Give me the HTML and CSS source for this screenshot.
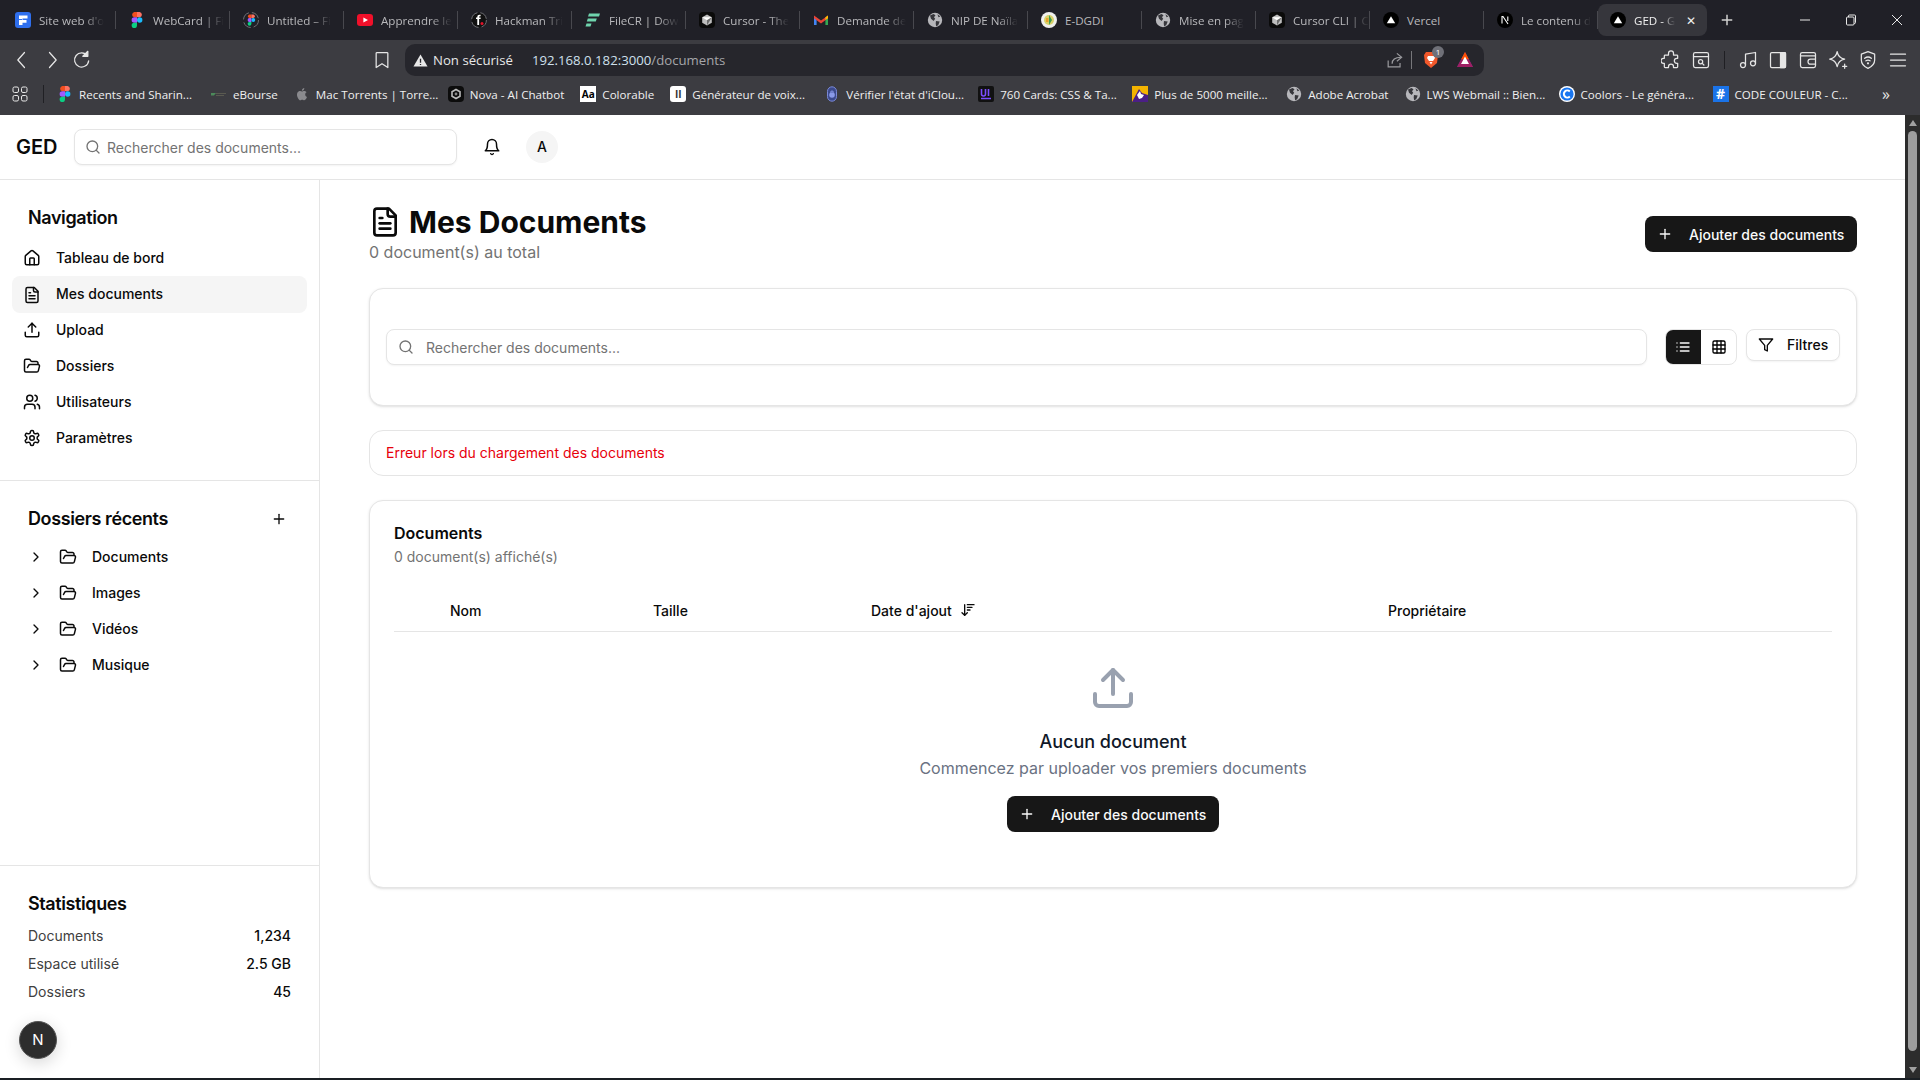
FILE: index.html
```html
<!DOCTYPE html>
<html lang="fr">
<head>
    <meta charset="UTF-8">
    <meta name="viewport" content="width=device-width, initial-scale=1.0">
    <title>GED - Mes Documents</title>
    <link rel="stylesheet" href="styles.css">
</head>
<body>
    <!-- icon sprites -->
    <svg class="sprites" width="0" height="0">
        <symbol id="i-house" viewBox="0 0 24 24"><path d="M15 21v-8a1 1 0 0 0-1-1h-4a1 1 0 0 0-1 1v8"/><path d="M3 10a2 2 0 0 1 .709-1.528l7-5.999a2 2 0 0 1 2.582 0l7 5.999A2 2 0 0 1 21 10v9a2 2 0 0 1-2 2H5a2 2 0 0 1-2-2z"/></symbol>
        <symbol id="i-file" viewBox="0 0 24 24"><path d="M15 2H6a2 2 0 0 0-2 2v16a2 2 0 0 0 2 2h12a2 2 0 0 0 2-2V7Z"/><path d="M14 2v4a2 2 0 0 0 2 2h4"/><path d="M10 9H8"/><path d="M16 13H8"/><path d="M16 17H8"/></symbol>
        <symbol id="i-upload" viewBox="0 0 24 24"><path d="M21 15v4a2 2 0 0 1-2 2H5a2 2 0 0 1-2-2v-4"/><polyline points="17 8 12 3 7 8"/><line x1="12" x2="12" y1="3" y2="15"/></symbol>
        <symbol id="i-folder" viewBox="0 0 24 24"><path d="m6 14 1.5-2.9A2 2 0 0 1 9.24 10H20a2 2 0 0 1 1.94 2.5l-1.54 6a2 2 0 0 1-1.95 1.5H4a2 2 0 0 1-2-2V5a2 2 0 0 1 2-2h3.9a2 2 0 0 1 1.69.9l.81 1.2a2 2 0 0 0 1.67.9H18a2 2 0 0 1 2 2v2"/></symbol>
        <symbol id="i-users" viewBox="0 0 24 24"><path d="M16 21v-2a4 4 0 0 0-4-4H6a4 4 0 0 0-4 4v2"/><circle cx="9" cy="7" r="4"/><path d="M22 21v-2a4 4 0 0 0-3-3.87"/><path d="M16 3.13a4 4 0 0 1 0 7.75"/></symbol>
        <symbol id="i-settings" viewBox="0 0 24 24"><path d="M12.22 2h-.44a2 2 0 0 0-2 2v.18a2 2 0 0 1-1 1.73l-.43.25a2 2 0 0 1-2 0l-.15-.08a2 2 0 0 0-2.73.73l-.22.38a2 2 0 0 0 .73 2.73l.15.1a2 2 0 0 1 1 1.72v.51a2 2 0 0 1-1 1.74l-.15.09a2 2 0 0 0-.73 2.73l.22.38a2 2 0 0 0 2.73.73l.15-.08a2 2 0 0 1 2 0l.43.25a2 2 0 0 1 1 1.73V20a2 2 0 0 0 2 2h.44a2 2 0 0 0 2-2v-.18a2 2 0 0 1 1-1.73l.43-.25a2 2 0 0 1 2 0l.15.08a2 2 0 0 0 2.73-.73l.22-.39a2 2 0 0 0-.73-2.73l-.15-.08a2 2 0 0 1-1-1.74v-.5a2 2 0 0 1 1-1.74l.15-.09a2 2 0 0 0 .73-2.73l-.22-.38a2 2 0 0 0-2.73-.73l-.15.08a2 2 0 0 1-2 0l-.43-.25a2 2 0 0 1-1-1.73V4a2 2 0 0 0-2-2z"/><circle cx="12" cy="12" r="3"/></symbol>
        <symbol id="i-bell" viewBox="0 0 24 24"><path d="M6 8a6 6 0 0 1 12 0c0 7 3 9 3 9H3s3-2 3-9"/><path d="M10.3 21a1.94 1.94 0 0 0 3.4 0"/></symbol>
        <symbol id="i-search" viewBox="0 0 24 24"><circle cx="11" cy="11" r="8"/><path d="m21 21-4.3-4.3"/></symbol>
        <symbol id="i-plus" viewBox="0 0 24 24"><path d="M5 12h14"/><path d="M12 5v14"/></symbol>
        <symbol id="i-chevron" viewBox="0 0 24 24"><path d="m9 18 6-6-6-6"/></symbol>
        <symbol id="i-list" viewBox="0 0 24 24"><path d="M3 12h.01M3 18h.01M3 6h.01M8 12h13M8 18h13M8 6h13"/></symbol>
        <symbol id="i-grid" viewBox="0 0 24 24"><rect width="18" height="18" x="3" y="3" rx="2"/><path d="M3 9h18M3 15h18M9 3v18M15 3v18"/></symbol>
        <symbol id="i-filter" viewBox="0 0 24 24"><polygon points="22 3 2 3 10 12.46 10 19 14 21 14 12.46 22 3"/></symbol>
        <symbol id="i-sort" viewBox="0 0 24 24"><path d="m3 16 4 4 4-4"/><path d="M7 20V4"/><path d="M11 4h10"/><path d="M11 8h7"/><path d="M11 12h4"/></symbol>

        <!-- favicons -->
        <symbol id="f-site" viewBox="0 0 16 16"><rect width="16" height="16" rx="3" fill="#2f6fed"/><path d="M4 3.5h8.5v3H7.5v1.6h4v2.6h-4V13H4z" fill="#fff"/><path d="M2 7h5v1H2z" fill="#2f6fed"/></symbol>
        <symbol id="f-figma" viewBox="0 0 16 16"><path d="M8 0H5.3a2.7 2.7 0 0 0 0 5.3H8z" fill="#f24e1e"/><path d="M8 0h2.7a2.7 2.7 0 0 1 0 5.3H8z" fill="#ff7262"/><path d="M8 5.3H5.3a2.7 2.7 0 0 0 0 5.4H8z" fill="#a259ff"/><circle cx="10.7" cy="8" r="2.7" fill="#1abcfe"/><path d="M8 10.7H5.3A2.7 2.7 0 1 0 8 13.4z" fill="#0acf83"/></symbol>
        <symbol id="f-spin" viewBox="0 0 16 16"><circle cx="8" cy="8" r="7.5" fill="none" stroke="#77777d" stroke-width=".9" stroke-dasharray="9 3"/><g transform="translate(2.8 2.4) scale(.7)"><path d="M8 0H5.3a2.7 2.7 0 0 0 0 5.3H8z" fill="#f24e1e"/><path d="M8 0h2.7a2.7 2.7 0 0 1 0 5.3H8z" fill="#ff7262"/><path d="M8 5.3H5.3a2.7 2.7 0 0 0 0 5.4H8z" fill="#a259ff"/><circle cx="10.7" cy="8" r="2.7" fill="#1abcfe"/><path d="M8 10.7H5.3A2.7 2.7 0 1 0 8 13.4z" fill="#0acf83"/></g></symbol>
        <symbol id="f-youtube" viewBox="0 0 16 16"><rect y="2" width="16" height="12" rx="3" fill="#f0102a"/><path d="M6.4 5.4 11 8l-4.6 2.6z" fill="#fff"/></symbol>
        <symbol id="f-hackman" viewBox="0 0 16 16"><circle cx="8" cy="8" r="7.4" fill="#111" stroke="#77777d" stroke-width=".9" stroke-dasharray="9 3"/><path d="M6.3 13V7H5V5.5h1.3V5c0-1.6.9-2.3 2.3-2.3h1v1.6h-.7c-.6 0-.8.2-.8.8v.4h1.5V7H8.1v6z" fill="#fff"/><circle cx="11" cy="11.4" r="1.5" fill="#e2132a"/></symbol>
        <symbol id="f-filecr" viewBox="0 0 16 16"><path d="M4 1.5h11l-1 3H3zM2.8 6.5h9l-1 3h-9zM1.5 11.5h5l-1 3h-5z" fill="#6fd4ad"/></symbol>
        <symbol id="f-cursor" viewBox="0 0 16 16"><rect width="16" height="16" rx="4" fill="#0a0a0a"/><path d="M8 2.6 12.8 5.3v5.4L8 13.4l-4.8-2.7V5.3z" fill="#bdbdbd"/><path d="M3.2 5.3h9.6L8 8.2z" fill="#fff"/><path d="M8 8.2 12.8 5.3 8 13.4z" fill="#6d6d6d"/></symbol>
        <symbol id="f-gmail" viewBox="0 0 16 16"><path d="M1 4v9h2.6V7.2z" fill="#4285f4"/><path d="M15 4v9h-2.6V7.2z" fill="#34a853"/><path d="M1 3.4 8 8.6l7-5.2v2.8L8 11.4 1 6.200z" fill="#ea4335"/><path d="M12.400 5.300 15 3.400v2.800l-2.600 1.900z" fill="#fbbc04"/></symbol>
        <symbol id="f-globe" viewBox="0 0 16 16"><circle cx="8" cy="8" r="7.2" fill="#b7b7bb"/><path d="M3 3.600 6.500 2l2 1.300L7 5.300l1.200 1.500L6.600 9 4 6.800zM9 9l3.700.6-1.500 3.600-2.100 1-.4-3zM10.400 2.200l3 2.200-1.900.9z" fill="#36363b"/></symbol>
        <symbol id="f-edgdi" viewBox="0 0 16 16"><circle cx="8" cy="8" r="8" fill="#f0f0ee"/><circle cx="8" cy="8" r="5" fill="#d8d26a"/><path d="M8 3 11 8 8 13z" fill="#3e9a52"/><rect x="5" y="6" width="2.500" height="4" fill="#e9a22c"/></symbol>
        <symbol id="f-vercel" viewBox="0 0 16 16"><circle cx="8" cy="8" r="8" fill="#000"/><path d="M8 4.300 12.200 11.200H3.800z" fill="#fff"/></symbol>
        <symbol id="f-next" viewBox="0 0 16 16"><circle cx="8" cy="8" r="8" fill="#000"/><path d="M5 11.500V4.500h1l5 7.500M10.800 4.500V9" fill="none" stroke="#fff" stroke-width="1.100"/></symbol>
        <symbol id="f-ebourse" viewBox="0 0 16 16"><path d="M0 7h5L3 9.500H0z" fill="#4c8a5a"/><path d="M5 7h10v1H5zM5 9h8v1H5z" fill="#5a5a50"/></symbol>
        <symbol id="f-apple" viewBox="0 0 16 16"><path d="M11.200 8.500c0-1.500 1.200-2.200 1.300-2.300-.7-1-1.800-1.200-2.200-1.200-.9-.1-1.800.6-2.300.6s-1.200-.6-2-.5c-1 0-2 .6-2.500 1.500-1.100 1.900-.3 4.600.8 6.100.5.800 1.100 1.600 1.900 1.600.8 0 1.100-.5 2-.5s1.200.5 2 .5 1.400-.8 1.900-1.500c.6-.9.800-1.700.9-1.800-.1 0-1.800-.7-1.800-2.500zM9.700 3.900c.4-.5.700-1.200.6-1.900-.6 0-1.300.4-1.800.9-.4.400-.7 1.100-.6 1.800.7.100 1.400-.3 1.800-.8z" fill="#8a8a8e"/></symbol>
        <symbol id="f-nova" viewBox="0 0 16 16"><rect width="16" height="16" rx="4" fill="#0c0c0c"/><path d="M8 3.500 12 5.800v4.400l-4 2.300-4-2.300V5.800z" fill="none" stroke="#bbb" stroke-width="1.600"/><circle cx="8" cy="8" r="1.400" fill="#888"/></symbol>
        <symbol id="f-ios" viewBox="0 0 16 16"><rect x="3.500" y=".8" width="9" height="14.400" rx="4.500" fill="#3c4a8c" stroke="#7b8ad8"/><circle cx="8" cy="9" r="2.800" fill="#8a9ae8"/><path d="M6.500 6.500a1.500 1.500 0 0 1 3 0" fill="none" stroke="#8a9ae8"/></symbol>
        <symbol id="f-ui" viewBox="0 0 16 16"><rect width="16" height="16" rx="2" fill="#111"/><path d="M3.500 3v5a2 2 0 0 0 4 0V3M10.500 3v7M3 12.500h10" fill="none" stroke="#7c4dff" stroke-width="1.600"/></symbol>
        <symbol id="f-plus5000" viewBox="0 0 16 16"><rect width="16" height="16" fill="#f4b400"/><path d="M0 16 7 3l3 4 6 2v7z" fill="#4b1f86"/><path d="M5 9 8 5l1 3 3 1-2 3-3 1z" fill="#fff"/></symbol>
        <symbol id="f-coolors" viewBox="0 0 16 16"><circle cx="8" cy="8" r="8" fill="#fff"/><circle cx="8" cy="8" r="6.600" fill="#1976f0"/><path d="M10.800 5.500a3.500 3.500 0 1 0 0 5" fill="none" stroke="#fff" stroke-width="2"/></symbol>
    </svg>

    <div class="chrome">
        <div class="tabbar">
            <div class="tab"><svg class="fav"><use href="#f-site"/></svg><span class="tab-title">Site web d'o</span></div>
            <div class="tab"><svg class="fav"><use href="#f-figma"/></svg><span class="tab-title">WebCard | Fi</span></div>
            <div class="tab"><svg class="fav"><use href="#f-spin"/></svg><span class="tab-title">Untitled – Fi</span></div>
            <div class="tab"><svg class="fav"><use href="#f-youtube"/></svg><span class="tab-title">Apprendre le</span></div>
            <div class="tab"><svg class="fav"><use href="#f-hackman"/></svg><span class="tab-title">Hackman Tri</span></div>
            <div class="tab"><svg class="fav"><use href="#f-filecr"/></svg><span class="tab-title">FileCR | Dow</span></div>
            <div class="tab"><svg class="fav"><use href="#f-cursor"/></svg><span class="tab-title">Cursor - The</span></div>
            <div class="tab"><svg class="fav"><use href="#f-gmail"/></svg><span class="tab-title">Demande de</span></div>
            <div class="tab"><svg class="fav"><use href="#f-globe"/></svg><span class="tab-title">NIP DE Naïla</span></div>
            <div class="tab"><svg class="fav"><use href="#f-edgdi"/></svg><span class="tab-title tab-title-full">E-DGDI</span></div>
            <div class="tab"><svg class="fav"><use href="#f-globe"/></svg><span class="tab-title">Mise en pag</span></div>
            <div class="tab"><svg class="fav"><use href="#f-cursor"/></svg><span class="tab-title">Cursor CLI | C</span></div>
            <div class="tab"><svg class="fav"><use href="#f-vercel"/></svg><span class="tab-title tab-title-full">Vercel</span></div>
            <div class="tab"><svg class="fav"><use href="#f-next"/></svg><span class="tab-title">Le contenu d</span></div>
            <div class="tab tab-active"><svg class="fav"><use href="#f-vercel"/></svg><span class="tab-title">GED - G</span><span class="tab-close">✕</span></div>
            <svg class="new-tab" viewBox="0 0 24 24"><use href="#i-plus"/></svg>
            <div class="win-controls">
                <svg viewBox="0 0 12 12"><path d="M1 6h10"/></svg>
                <svg viewBox="0 0 12 12"><rect x="1.500" y="3" width="7.500" height="8" rx="1"/><path d="M3.500 3V2a1 1 0 0 1 1-1h5a1 1 0 0 1 1 1v6.500a1 1 0 0 1-1 1H9"/></svg>
                <svg viewBox="0 0 12 12"><path d="M1 1l10 10M11 1 1 11"/></svg>
            </div>
        </div>

        <div class="toolbar">
            <button class="tool"><svg viewBox="0 0 24 24"><path d="M15 3 7 12l8 9"/></svg></button>
            <button class="tool"><svg viewBox="0 0 24 24"><path d="m9 3 8 9-8 9"/></svg></button>
            <button class="tool"><svg viewBox="0 0 24 24"><path d="M18.500 7A8.500 8.500 0 1 0 20 13"/><path d="M13 7.500h6v-6z" class="solid"/></svg></button>
            <button class="tool tool-bookmark"><svg viewBox="0 0 24 24"><path d="M6 3h12a1 1 0 0 1 1 1v17l-7-4.500L5 21V4a1 1 0 0 1 1-1z"/></svg></button>
            <div class="address">
                <svg class="warn" viewBox="0 0 16 16"><path d="M8 1.500 15.500 14.500H.5z" fill="#e8e8e8"/><path d="M8 6v4.500M8 11.700v1.200" stroke="#26262c" stroke-width="1.400"/></svg>
                <span class="secure">Non sécurisé</span>
                <span class="url">192.168.0.182:3000<span class="url-path">/documents</span></span>
                <svg class="addr-share" viewBox="0 0 24 24"><path d="M4 12v8h15v-5"/><path d="M9 16c0-5 3-8 11-8"/><path d="m15 3 6 5-6 5"/></svg>
                <span class="addr-sep"></span>
                <span class="brave">
                    <svg viewBox="0 0 16 18"><path d="M3 1h10l2 3-1 8-6 5-6-5L1 4z" fill="#f1582b"/><path d="M5 5h6l1 2-2 3H6L4 7zM6.500 11h3L8 13.500z" fill="#fff"/></svg>
                    <span class="badge">1</span>
                </span>
                <svg class="bat" viewBox="0 0 18 18"><path d="M9 1 17 16H1z" fill="#662d91"/><path d="M9 1 13 8.500H5z" fill="#ff5000"/><path d="M1 16l4-7.500h8l4 7.500z" fill="#9e1f63"/><path d="M9 5.500 13 13H5z" fill="#fff"/></svg>
            </div>
            <button class="tool tool-extensions"><svg viewBox="0 0 24 24"><path d="M9 4a3 3 0 0 1 6 0v2h4a1 1 0 0 1 1 1v3h-1a3 3 0 0 0 0 6h1v4a1 1 0 0 1-1 1h-4v-1a3 3 0 0 0-6 0v1H5a1 1 0 0 1-1-1v-4H3a3 3 0 0 1 0-6h1V7a1 1 0 0 1 1-1h4z"/></svg></button>
            <button class="tool"><svg viewBox="0 0 24 24"><rect x="3" y="3" width="18" height="18" rx="2"/><path d="M3 8h18"/><circle cx="11.500" cy="14" r="2.500"/><path d="m13.500 16 2 2"/></svg></button>
            <span class="tool-sep"></span>
            <button class="tool"><svg viewBox="0 0 24 24"><path d="M9 18V5l12-2v13"/><circle cx="6" cy="18" r="3"/><circle cx="18" cy="16" r="3"/></svg></button>
            <button class="tool"><svg viewBox="0 0 24 24"><rect x="3" y="3" width="18" height="18" rx="1.500"/><path d="M15 3h5a1 1 0 0 1 1 1v16a1 1 0 0 1-1 1h-5z" class="solid"/></svg></button>
            <button class="tool"><svg viewBox="0 0 24 24"><path d="M21 7V5a2 2 0 0 0-2-2H5a2 2 0 0 0-2 2v14a2 2 0 0 0 2 2h14a2 2 0 0 0 2-2v-2"/><path d="M3 7h18v10h-6a2.500 2.500 0 0 1 0-6h6"/></svg></button>
            <button class="tool"><svg viewBox="0 0 24 24"><path d="M11 2c.8 5 3 8 9 9-6 1-8 4-9 9-1-5-3-8-9-9 6-1 8-4 9-9z"/><path d="M20 17v5M17.500 19.500h5"/></svg></button>
            <button class="tool"><svg viewBox="0 0 24 24"><path d="M12 2 20 5v7c0 5-3.500 8-8 10-4.500-2-8-5-8-10V5z"/><path d="M8 10c2.500-2 5.500-2 8 0M9.500 13c1.500-1 3.500-1 5 0"/><circle cx="12" cy="16" r=".6"/></svg></button>
            <button class="tool"><svg viewBox="0 0 24 24"><path d="M3 5h18M3 12h18M3 19h18"/></svg></button>
        </div>

        <div class="bookmarks">
            <svg class="apps" viewBox="0 0 16 16"><rect x="1" y="1" width="5.500" height="5.500" rx="1.500"/><rect x="9.500" y="1" width="5.500" height="5.500" rx="1.500"/><rect x="1" y="9.500" width="5.500" height="5.500" rx="1.500"/><rect x="9.500" y="9.500" width="5.500" height="5.500" rx="1.500"/></svg>
            <span class="bm-sep"></span>
            <div class="bm bm-long"><svg class="fav"><use href="#f-figma"/></svg><span>Recents and Sharin...</span></div>
            <div class="bm"><svg class="fav"><use href="#f-ebourse"/></svg><span>eBourse</span></div>
            <div class="bm bm-long"><svg class="fav"><use href="#f-apple"/></svg><span>Mac Torrents | Torre...</span></div>
            <div class="bm"><svg class="fav"><use href="#f-nova"/></svg><span>Nova - AI Chatbot</span></div>
            <div class="bm"><span class="fav-aa">Aa</span><span>Colorable</span></div>
            <div class="bm bm-long"><span class="fav-pause">II</span><span>Générateur de voix...</span></div>
            <div class="bm bm-long"><svg class="fav"><use href="#f-ios"/></svg><span>Vérifier l'état d'iClou...</span></div>
            <div class="bm bm-long"><svg class="fav"><use href="#f-ui"/></svg><span>760 Cards: CSS &amp; Ta...</span></div>
            <div class="bm bm-long"><svg class="fav"><use href="#f-plus5000"/></svg><span>Plus de 5000 meille...</span></div>
            <div class="bm"><svg class="fav"><use href="#f-globe"/></svg><span>Adobe Acrobat</span></div>
            <div class="bm bm-long"><svg class="fav"><use href="#f-globe"/></svg><span>LWS Webmail :: Bien...</span></div>
            <div class="bm bm-long"><svg class="fav"><use href="#f-coolors"/></svg><span>Coolors - Le généra...</span></div>
            <div class="bm bm-long"><span class="fav-hash">#</span><span>CODE COULEUR - C...</span></div>
            <span class="bm-more">»</span>
        </div>
    </div>

    <div class="viewport">
        <div class="page">
            <header class="topbar">
                <span class="logo">GED</span>
                <div class="search search-top">
                    <svg class="icon icon-16 muted"><use href="#i-search"/></svg>
                    <span>Rechercher des documents...</span>
                </div>
                <svg class="icon icon-18 bell"><use href="#i-bell"/></svg>
                <span class="avatar">A</span>
            </header>

            <div class="layout">
                <aside class="sidebar">
                    <section class="side-section">
                        <h2 class="side-title">Navigation</h2>
                        <nav>
                            <a class="nav-item"><svg class="icon icon-18"><use href="#i-house"/></svg>Tableau de bord</a>
                            <a class="nav-item active"><svg class="icon icon-18"><use href="#i-file"/></svg>Mes documents</a>
                            <a class="nav-item"><svg class="icon icon-18"><use href="#i-upload"/></svg>Upload</a>
                            <a class="nav-item"><svg class="icon icon-18"><use href="#i-folder"/></svg>Dossiers</a>
                            <a class="nav-item"><svg class="icon icon-18"><use href="#i-users"/></svg>Utilisateurs</a>
                            <a class="nav-item"><svg class="icon icon-18"><use href="#i-settings"/></svg>Paramètres</a>
                        </nav>
                    </section>

                    <section class="side-section side-folders">
                        <div class="side-head">
                            <h2 class="side-title">Dossiers récents</h2>
                            <svg class="icon icon-16"><use href="#i-plus"/></svg>
                        </div>
                        <div class="folder-row"><svg class="icon icon-16"><use href="#i-chevron"/></svg><svg class="icon icon-18"><use href="#i-folder"/></svg>Documents</div>
                        <div class="folder-row"><svg class="icon icon-16"><use href="#i-chevron"/></svg><svg class="icon icon-18"><use href="#i-folder"/></svg>Images</div>
                        <div class="folder-row"><svg class="icon icon-16"><use href="#i-chevron"/></svg><svg class="icon icon-18"><use href="#i-folder"/></svg>Vidéos</div>
                        <div class="folder-row"><svg class="icon icon-16"><use href="#i-chevron"/></svg><svg class="icon icon-18"><use href="#i-folder"/></svg>Musique</div>
                    </section>

                    <section class="side-section side-stats">
                        <h2 class="side-title">Statistiques</h2>
                        <div class="stat"><span>Documents</span><b>1,234</b></div>
                        <div class="stat"><span>Espace utilisé</span><b>2.5 GB</b></div>
                        <div class="stat"><span>Dossiers</span><b>45</b></div>
                    </section>
                </aside>

                <main class="main">
                    <div class="page-head">
                        <div>
                            <h1><svg class="icon icon-32"><use href="#i-file"/></svg>Mes Documents</h1>
                            <p class="page-sub">0 document(s) au total</p>
                        </div>
                        <button class="btn-primary"><svg class="icon icon-16"><use href="#i-plus"/></svg>Ajouter des documents</button>
                    </div>

                    <div class="card card-search">
                        <div class="search search-main">
                            <svg class="icon icon-16 muted"><use href="#i-search"/></svg>
                            <span>Rechercher des documents...</span>
                        </div>
                        <div class="view-toggle">
                            <button class="toggle-on"><svg class="icon icon-16"><use href="#i-list"/></svg></button>
                            <button><svg class="icon icon-16"><use href="#i-grid"/></svg></button>
                        </div>
                        <button class="btn-filter"><svg class="icon icon-16"><use href="#i-filter"/></svg>Filtres</button>
                    </div>

                    <div class="card card-error">Erreur lors du chargement des documents</div>

                    <div class="card card-docs">
                        <h3>Documents</h3>
                        <p class="docs-sub">0 document(s) affiché(s)</p>
                        <div class="table-head">
                            <span></span>
                            <span>Nom</span>
                            <span>Taille</span>
                            <span class="sortable">Date d'ajout<svg class="icon icon-16"><use href="#i-sort"/></svg></span>
                            <span>Propriétaire</span>
                        </div>
                        <div class="empty">
                            <svg class="icon icon-48"><use href="#i-upload"/></svg>
                            <h4>Aucun document</h4>
                            <p>Commencez par uploader vos premiers documents</p>
                            <button class="btn-primary"><svg class="icon icon-16"><use href="#i-plus"/></svg>Ajouter des documents</button>
                        </div>
                    </div>
                </main>
            </div>

            <div class="next-badge">N</div>
        </div>

        <div class="scrollbar">
            <span class="arrow-up"></span>
            <span class="thumb"></span>
            <span class="arrow-down"></span>
        </div>
    </div>
</body>
</html>
```

FILE: styles.css
```css
* {
    box-sizing: border-box;
}
html, body {
    margin: 0;
    height: 100%;
}
body {
    width: 1920px;
    height: 1080px;
    overflow: hidden;
    display: flex;
    flex-direction: column;
    background-color: #1a1f24;
    font-family: Inter, "Liberation Sans", sans-serif;
    color: #0a0a0a;
}
button {
    font-family: inherit;
    border: none;
    background: none;
    padding: 0;
}
h1, h2, h3, h4, p {
    margin: 0;
}
.sprites {
    position: absolute;
}

/* browser chrome */
.chrome {
    flex: none;
    font-family: "Open Sans", "Noto Sans", sans-serif;
}
.tabbar {
    height: 40px;
    display: flex;
    align-items: center;
    padding-left: 2px;
    background-color: #202027;
}
.tab {
    width: 114px;
    height: 18px;
    flex: none;
    display: flex;
    align-items: center;
    gap: 8px;
    padding-left: 13px;
    border-right: 1px solid #48484e;
}
.fav {
    width: 16px;
    height: 16px;
    flex: none;
}
.tab-title {
    white-space: nowrap;
    font-size: 11.6px;
    color: #b9b9bc;
    -webkit-mask-image: linear-gradient(to right, #000 70%, transparent 100%);
    mask-image: linear-gradient(to right, #000 70%, transparent 100%);
}
.tab-title-full {
    -webkit-mask-image: none;
    mask-image: none;
}
.tab-active {
    width: 109px;
    height: 32px;
    border: none;
    border-radius: 8px;
    padding-left: 12px;
    background-color: #36363c;
}
.tab-active .tab-title {
    color: #f0f0f0;
}
.tab-close {
    width: 28px;
    margin-left: auto;
    margin-right: 2px;
    font-size: 12px;
    color: #f0f0f0;
    text-align: center;
}
.tab-active .tab-title + .tab-close {
    margin-left: -6px;
}
.new-tab {
    width: 18px;
    height: 18px;
    margin-left: 11px;
    fill: none;
    stroke: #d0d0d0;
    stroke-width: 2;
}
.win-controls path, .win-controls rect {
    vector-effect: non-scaling-stroke;
}
.win-controls {
    margin-left: auto;
    display: flex;
    gap: 34px;
    padding-right: 17px;
}
.win-controls svg {
    width: 12px;
    height: 12px;
    fill: none;
    stroke: #e8e8e8;
    stroke-width: 1;
}

.toolbar {
    height: 36px;
    display: flex;
    align-items: center;
    gap: 6px;
    padding: 4px 0 0 10px;
    background-color: #3c3c41;
}
.tool {
    width: 24px;
    height: 24px;
    flex: none;
    display: flex;
    align-items: center;
    justify-content: center;
}
.tool svg {
    width: 20px;
    height: 20px;
    fill: none;
    stroke: #e6e6e6;
    stroke-width: 1.5;
    stroke-linecap: round;
    stroke-linejoin: round;
}
.tool svg .solid {
    fill: #e6e6e6;
}
.tool-bookmark {
    margin-left: 270px;
}
.address {
    width: 1079px;
    height: 32px;
    margin-left: 5px;
    display: flex;
    align-items: center;
    padding-left: 8px;
    border-radius: 10px;
    background-color: #26262c;
    font-size: 13.2px;
    white-space: nowrap;
}
.warn {
    width: 15px;
    height: 15px;
    flex: none;
}
.secure {
    margin-left: 5px;
    color: #e8e8e8;
}
.url {
    margin-left: 19px;
    color: #cfe0ec;
}
.url-path {
    color: #a5a5a9;
}
.addr-share {
    width: 19px;
    height: 19px;
    margin-left: auto;
    fill: none;
    stroke: #9a9a9e;
    stroke-width: 1.5;
}
.addr-sep {
    width: 1px;
    height: 18px;
    margin: 0 11px 0 7px;
    background-color: #77777b;
}
.brave {
    position: relative;
    width: 16px;
    height: 18px;
}
.brave svg {
    display: block;
    width: 16px;
    height: 18px;
}
.badge {
    position: absolute;
    top: -5px;
    left: 9px;
    width: 12px;
    height: 12px;
    border-radius: 50%;
    background-color: #6f7078;
    color: #fff;
    font-size: 8px;
    line-height: 12px;
    text-align: center;
}
.bat {
    width: 18px;
    height: 18px;
    margin-left: 17px;
    margin-right: 10px;
}
.tool-extensions {
    margin-left: 169px;
}
.tool-sep {
    width: 1px;
    height: 18px;
    margin: 0 5px;
    background-color: #1f1f23;
}

.bookmarks {
    height: 39px;
    display: flex;
    align-items: center;
    padding-bottom: 3px;
    background-color: #3c3c41;
    font-size: 11.6px;
    color: #f0f0f0;
    white-space: nowrap;
}
.apps {
    width: 16px;
    height: 16px;
    margin-left: 12px;
    fill: none;
    stroke: #e6e6e6;
    stroke-width: 1;
}
.bm-sep {
    width: 1px;
    height: 18px;
    margin: 0 13px 0 15px;
    background-color: #202024;
}
.bm {
    flex: none;
    display: flex;
    align-items: center;
    gap: 6px;
    padding-right: 16px;
}
.bm-long {
    width: 154px;
    padding-right: 0;
}
.fav-aa, .fav-pause, .fav-hash {
    width: 16px;
    height: 16px;
    flex: none;
    font-size: 10px;
    line-height: 16px;
    text-align: center;
    font-weight: 700;
}
.fav-aa {
    background-color: #fff;
    color: #000;
}
.fav-pause {
    border-radius: 3px;
    background-color: #fff;
    color: #333;
}
.fav-hash {
    background-color: #1a73e8;
    color: #fff;
    font-size: 14px;
}
.bm-more {
    margin-left: auto;
    margin-right: 30px;
    font-size: 16px;
    color: #e6e6e6;
}

/* page */
.viewport {
    height: 963px;
    flex: none;
    display: flex;
}
.page {
    position: relative;
    flex: 1;
    min-width: 0;
    display: flex;
    flex-direction: column;
    background-color: #fff;
}
.icon {
    flex: none;
    fill: none;
    stroke: currentColor;
    stroke-width: 2;
    stroke-linecap: round;
    stroke-linejoin: round;
}
.icon-16 {
    width: 16px;
    height: 16px;
}
.icon-18 {
    width: 18px;
    height: 18px;
}
.icon-32 {
    width: 32px;
    height: 32px;
}
.icon-48 {
    width: 48px;
    height: 48px;
}
.muted {
    color: #737373;
}

.topbar {
    height: 65px;
    flex: none;
    display: flex;
    align-items: center;
    padding: 0 0 1px 16px;
    border-bottom: 1px solid #e5e5e5;
}
.logo {
    width: 58px;
    font-size: 20px;
    font-weight: 600;
}
.search {
    display: flex;
    align-items: center;
    height: 36px;
    border: 1px solid #e5e5e5;
    border-radius: 8px;
    background-color: #fff;
    box-shadow: 0 1px 2px rgba(0, 0, 0, 0.05);
    font-size: 14px;
    color: #737373;
}
.search-top {
    width: 383px;
    gap: 6px;
    padding-left: 10px;
}
.search-top span {
    padding-top: 2px;
}
.bell {
    margin-left: 26px;
}
.avatar {
    width: 32px;
    height: 32px;
    margin-left: 25px;
    border-radius: 50%;
    background-color: #f5f5f5;
    font-size: 14px;
    font-weight: 500;
    line-height: 32px;
    text-align: center;
}

.layout {
    flex: 1;
    min-height: 0;
    display: flex;
}
.sidebar {
    width: 320px;
    flex: none;
    display: flex;
    flex-direction: column;
    border-right: 1px solid #e5e5e5;
}
.side-section {
    padding: 24px 12px;
    border-bottom: 1px solid #e5e5e5;
}
.side-title {
    padding-left: 16px;
    margin-bottom: 8px;
    font-size: 18px;
    line-height: 28px;
    font-weight: 600;
    letter-spacing: -0.4px;
}
.nav-item {
    height: 36px;
    display: flex;
    align-items: center;
    gap: 15px;
    padding: 0 0 2px 11px;
    border-radius: 8px;
    font-size: 14px;
    font-weight: 500;
}
.nav-item .icon {
    margin-top: 2px;
}
.nav-item.active {
    height: 37px;
    margin-bottom: -1px;
    background-color: #f5f5f5;
}
.side-folders {
    flex: 1;
}
.side-head {
    display: flex;
    justify-content: space-between;
    padding-right: 20px;
}
.side-head .side-title {
    margin-bottom: 6px;
}
.side-head .icon {
    margin-top: 6px;
}
.folder-row {
    height: 36px;
    display: flex;
    align-items: center;
    padding: 0 0 2px 16px;
    font-size: 14px;
    font-weight: 500;
}
.folder-row .icon {
    margin-top: 2px;
}
.folder-row .icon-18 {
    margin-left: 15px;
    margin-right: 15px;
}
.side-stats {
    height: 212px;
    padding: 24px 28px;
    border-bottom: none;
}
.side-stats .side-title {
    padding-left: 0;
}
.stat {
    height: 20px;
    margin-bottom: 8px;
    display: flex;
    justify-content: space-between;
    font-size: 14px;
    line-height: 20px;
    color: #404040;
}
.stat b {
    font-weight: 500;
    color: #0a0a0a;
}

.main {
    flex: 1;
    min-width: 0;
    padding: 24px 48px 24px 49px;
}
.page-head {
    display: flex;
    justify-content: space-between;
    align-items: center;
    margin-bottom: 24px;
}
h1 {
    display: flex;
    align-items: center;
    gap: 8px;
    font-size: 30px;
    line-height: 36px;
    font-weight: 700;
}
.page-sub {
    font-size: 16px;
    line-height: 24px;
    color: #737373;
}
.btn-primary {
    width: 212px;
    height: 36px;
    display: flex;
    align-items: center;
    gap: 16px;
    padding-left: 12px;
    border-radius: 8px;
    background-color: #171717;
    color: #fafafa;
    font-size: 14px;
    font-weight: 500;
    white-space: nowrap;
}
.card {
    margin-bottom: 24px;
    border: 1px solid #e5e5e5;
    border-radius: 14px;
    background-color: #fff;
    box-shadow: 0 1px 3px rgba(0, 0, 0, 0.1), 0 1px 2px -1px rgba(0, 0, 0, 0.1);
}
.card-search {
    height: 118px;
    display: flex;
    align-items: flex-start;
    padding: 40px 16px;
}
.search-main {
    flex: 1;
    gap: 12px;
    padding-left: 11px;
}
.search-main span {
    padding-top: 1px;
}
.view-toggle {
    height: 36px;
    margin-left: 18px;
    display: flex;
    border: 1px solid #e5e5e5;
    border-radius: 8px;
    overflow: hidden;
}
.view-toggle button {
    width: 35px;
    flex: none;
    display: flex;
    align-items: center;
    justify-content: center;
}
.view-toggle .toggle-on {
    width: 36px;
    margin: -1px 0 -1px -1px;
    background-color: #171717;
    color: #fafafa;
}
.btn-filter {
    width: 94px;
    height: 32px;
    margin-left: 9px;
    display: flex;
    align-items: center;
    gap: 13px;
    padding: 0 0 1px 11px;
    border: 1px solid #e5e5e5;
    border-radius: 8px;
    background-color: #fff;
    box-shadow: 0 1px 2px rgba(0, 0, 0, 0.05);
    color: #0a0a0a;
    font-size: 14px;
    font-weight: 500;
}
.card-error {
    height: 46px;
    display: flex;
    align-items: center;
    padding: 0 0 2px 16px;
    font-size: 14px;
    color: #e7000b;
    box-shadow: none;
}
.card-docs {
    height: 388px;
    padding: 20px 24px 0;
}
.card-docs h3 {
    font-size: 16px;
    line-height: 24px;
    font-weight: 600;
}
.docs-sub {
    margin-top: 2px;
    font-size: 14px;
    line-height: 20px;
    color: #737373;
}
.table-head {
    height: 41px;
    margin-top: 24px;
    display: grid;
    grid-template-columns: 56px 203px 218px 517px 1fr;
    align-items: center;
    padding-bottom: 2px;
    border-bottom: 1px solid #e5e5e5;
    font-size: 14px;
    font-weight: 500;
}
.sortable {
    display: flex;
    align-items: center;
    gap: 8px;
}
.empty {
    display: flex;
    flex-direction: column;
    align-items: center;
    padding-top: 32px;
}
.empty .icon-48 {
    color: #99a1af;
    margin-bottom: 16px;
}
.empty h4 {
    font-size: 18px;
    line-height: 28px;
    font-weight: 500;
    color: #101828;
}
.empty p {
    margin-bottom: 16px;
    font-size: 16px;
    line-height: 24px;
    color: #6a7282;
}
.next-badge {
    position: absolute;
    left: 19px;
    top: 906px;
    width: 38px;
    height: 38px;
    border: 1px solid #555;
    border-radius: 50%;
    background-color: #2d2d2d;
    box-shadow: 0 4px 16px rgba(0, 0, 0, 0.16);
    color: #fff;
    font-size: 15px;
    line-height: 36px;
    text-align: center;
}

.scrollbar {
    width: 15px;
    flex: none;
    display: flex;
    flex-direction: column;
    align-items: center;
    background-color: #2c2c2c;
}
.arrow-up, .arrow-down {
    width: 0;
    height: 0;
    border-left: 4.5px solid transparent;
    border-right: 4.5px solid transparent;
}
.arrow-up {
    margin-top: 5px;
    border-bottom: 6px solid #a0a0a0;
}
.thumb {
    width: 9px;
    flex: 1;
    margin: 5px 0 16px;
    border-radius: 5px;
    background-color: #9e9e9e;
}
.arrow-down {
    margin-bottom: 5px;
    border-top: 6px solid #a0a0a0;
}
```
